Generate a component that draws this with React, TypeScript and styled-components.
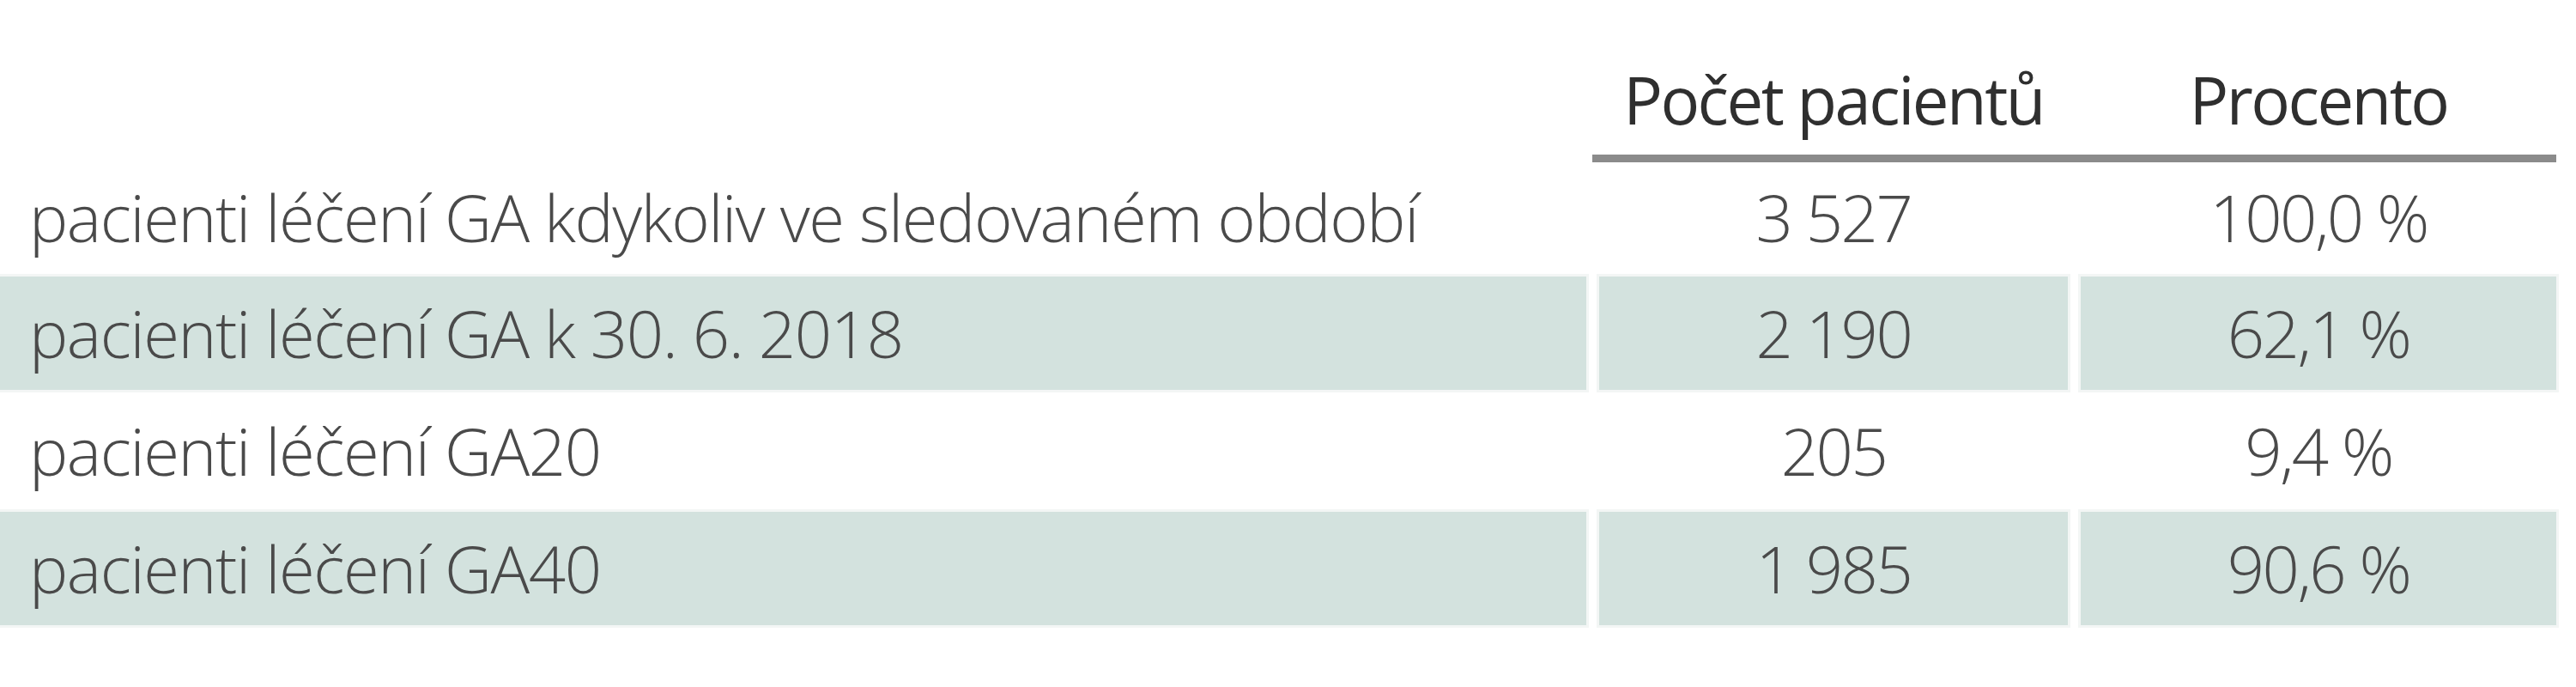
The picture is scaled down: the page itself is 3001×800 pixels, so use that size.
import styled, { createGlobalStyle } from "styled-components";

const GlobalStyle = createGlobalStyle`
  body {
    margin: 0;
    background: #ffffff;
    font-family: "Open Sans", "Noto Sans", sans-serif;
  }
`;

const COLUMNS = "1848px 546px 554px";

type Row = { label: string; count: string; percent: string };

const ROWS: Row[] = [
  { label: "pacienti léčení GA kdykoliv ve sledovaném období", count: "3 527", percent: "100,0 %" },
  { label: "pacienti léčení GA k 30. 6. 2018", count: "2 190", percent: "62,1 %" },
  { label: "pacienti léčení GA20", count: "205", percent: "9,4 %" },
  { label: "pacienti léčení GA40", count: "1 985", percent: "90,6 %" },
];

export default function App() {
  return (
    <>
      <GlobalStyle />
      <Page>
        <HeaderRow>
          <HeaderGroup>
            <HeaderCell>Počet pacientů</HeaderCell>
            <HeaderCell>Procento</HeaderCell>
          </HeaderGroup>
        </HeaderRow>
        <Body>
          {ROWS.map((row, i) => {
            const shaded = i % 2 === 1;
            return [
              <Cell key={`${i}-l`} $shaded={shaded} $align="left">
                {row.label}
              </Cell>,
              <Cell key={`${i}-c`} $shaded={shaded} $align="center">
                {row.count}
              </Cell>,
              <Cell key={`${i}-p`} $shaded={shaded} $align="center">
                {row.percent}
              </Cell>,
            ];
          })}
        </Body>
      </Page>
    </>
  );
}

const Page = styled.div`
  width: 3001px;
  height: 800px;
  overflow: hidden;
`;

const HeaderRow = styled.div`
  display: grid;
  grid-template-columns: ${COLUMNS};
  column-gap: 15px;
  height: 189px;
`;

const HeaderGroup = styled.div`
  grid-column: 2 / span 2;
  display: grid;
  grid-template-columns: 546px 554px;
  column-gap: 15px;
  margin-left: -8px;
  padding: 78px 0 0 8px;
  border-bottom: 9px solid #8b8b8b;
`;

const HeaderCell = styled.div`
  font-size: 76px;
  line-height: 76px;
  font-weight: 400;
  color: #2f2f2f;
  letter-spacing: -2.5px;
  text-align: center;
  white-space: nowrap;
`;

const Body = styled.div`
  display: grid;
  grid-template-columns: ${COLUMNS};
  grid-template-rows: 128px repeat(3, 132px);
  column-gap: 15px;
  row-gap: 5px;
`;

const Cell = styled.div<{ $shaded: boolean; $align: "left" | "center" }>`
  display: flex;
  align-items: center;
  justify-content: ${(p) => (p.$align === "left" ? "flex-start" : "center")};
  padding-left: ${(p) => (p.$align === "left" ? "34px" : "0")};
  background: ${(p) => (p.$shaded ? "#d3e2de" : "transparent")};
  box-shadow: ${(p) => (p.$shaded ? "0 0 0 3px #f3f6f5" : "none")};
  font-size: 76px;
  line-height: 76px;
  font-weight: 300;
  color: #4a4a4a;
  letter-spacing: ${(p) => (p.$align === "left" ? "-1.4px" : "-2.5px")};
  white-space: nowrap;
`;
